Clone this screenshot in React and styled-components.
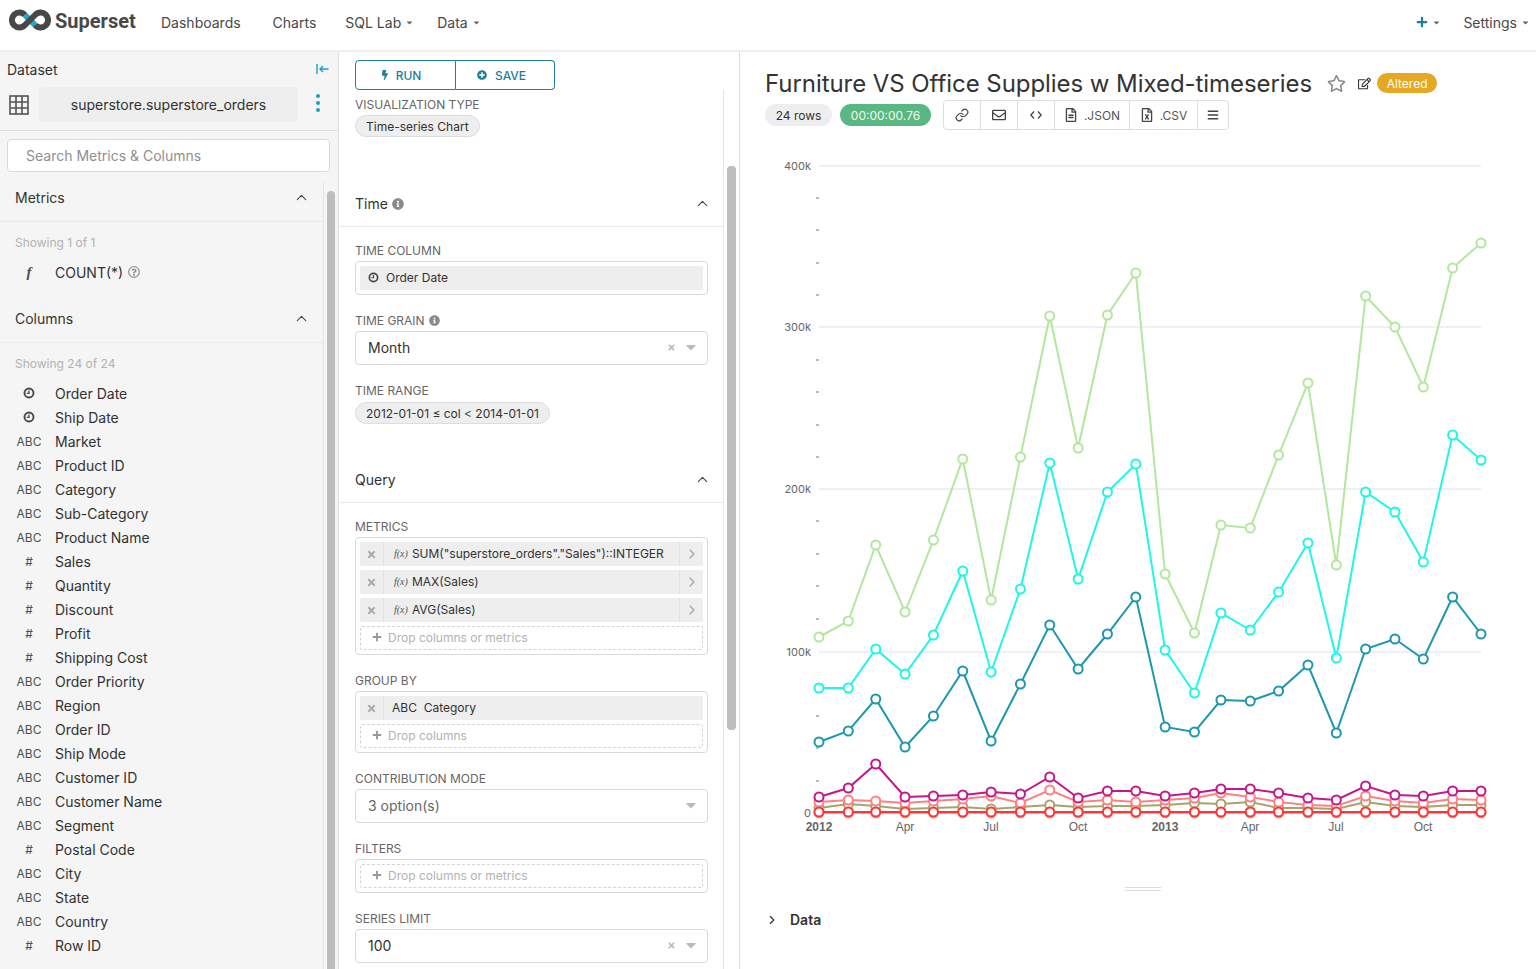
import React from "react";
import styled, { createGlobalStyle } from "styled-components";
import {
  FaBolt, FaPlusCircle, FaRegEnvelope, FaRegFileAlt, FaRegFileExcel, FaBars,
  FaRegStar, FaRegEdit, FaInfoCircle, FaPlus, FaCaretDown, FaRegQuestionCircle,
  FaTimes,
} from "react-icons/fa";
import { ChevronUp, ChevronRight, Link } from "lucide-react";

const PRIMARY = "#1f7f99";

const GlobalStyle = createGlobalStyle`
  html, body { margin: 0; padding: 0; height: 969px; overflow: hidden; background: #fff; }
  body { font-family: Inter, "Liberation Sans", sans-serif; font-size: 14px; color: #323232; }
  * { box-sizing: border-box; }
`;

/* ---------- top nav ---------- */
const Nav = styled.nav`
  height: 52px;
  display: flex;
  align-items: center;
  border-bottom: 2px solid #eeeeee;
  padding: 0 6px 6px 9px;
`;
const Brand = styled.div`
  display: flex;
  align-items: center;
  gap: 4px;
  width: 152px;
  margin-top: -3px;
  font-family: Roboto, sans-serif;
  font-size: 20px;
  font-weight: 700;
  color: #484848;
  svg { margin-top: -2px; }
`;
const NavItem = styled.a`
  display: flex;
  align-items: center;
  gap: 4px;
  margin-right: ${(p) => p.$gap}px;
  color: #484848;
  svg { color: #666; font-size: 9px; }
`;
const NavRight = styled.div`
  margin-left: auto;
  display: flex;
  align-items: center;
`;
const PlusIcon = styled(FaPlus)`
  && { color: ${PRIMARY}; font-size: 12px; }
`;

/* ---------- page columns ---------- */
const Page = styled.div`
  display: flex;
  height: 917px;
`;
const LeftPanel = styled.aside`
  width: 339px;
  flex: none;
  background: #f5f5f5;
  border-right: 1px solid #dddddd;
  display: flex;
  flex-direction: column;
`;
const CenterPanel = styled.section`
  width: 401px;
  flex: none;
  border-right: 1px solid #dddddd;
  display: flex;
  flex-direction: column;
`;
const RightPanel = styled.main`
  flex: 1;
  min-width: 0;
  padding: 18px 0 0 25px;
`;

/* ---------- dataset column ---------- */
const DatasetHead = styled.div`
  height: 79px;
  padding: 8px 7px 0;
  border-bottom: 1px solid #dddddd;
`;
const DatasetTitleRow = styled.div`
  display: flex;
  justify-content: space-between;
  align-items: center;
  height: 18px;
  padding-right: 2px;
  svg { display: block; }
`;
const DatasetPickRow = styled.div`
  display: flex;
  align-items: center;
  margin-top: 9px;
  padding-left: 2px;
  gap: 10px;
`;
const DatasetName = styled.div`
  width: 259px;
  height: 35px;
  background: #eeeeee;
  border-radius: 4px;
  display: flex;
  align-items: center;
  justify-content: center;
`;
const KebabSlot = styled.span`
  margin-left: 8px;
`;
const SearchBox = styled.div`
  height: 33px;
  margin: 8px 8px 0 7px;
  background: #fff;
  border: 1px solid #d9d9d9;
  border-radius: 4px;
  padding-left: 18px;
  display: flex;
  align-items: center;
  color: #8f8f8f;
`;
const LeftBody = styled.div`
  flex: 1;
  min-height: 0;
  margin-top: 10px;
  display: flex;
`;
const LeftList = styled.div`
  width: 323px;
  flex: none;
`;
const SectionHead = styled.div`
  height: ${(p) => p.$h}px;
  margin-top: ${(p) => p.$top || 0}px;
  display: flex;
  align-items: flex-end;
  justify-content: space-between;
  padding: 0 15px ${(p) => p.$pb}px 15px;
  border-bottom: 1px solid #eaeaea;
`;
const ControlHead = styled(SectionHead)`
  padding-left: 16px;
  padding-right: 14px;
`;
const Chevron = styled(ChevronUp)`
  color: #444;
  width: 17px;
  height: 17px;
  stroke-width: 1.5;
  margin-right: -2px;
`;
const Showing = styled.div`
  font-size: 12px;
  color: #b2b2b2;
  padding: 0 15px;
  margin-top: ${(p) => p.$top}px;
  height: 16px;
  line-height: 16px;
  margin-bottom: ${(p) => p.$bottom}px;
`;
const ListRow = styled.div`
  height: 24px;
  display: flex;
  align-items: center;
`;
const TypeCell = styled.div`
  width: 58px;
  margin-right: -3px;
  display: flex;
  justify-content: center;
  font-size: 12px;
  color: #4f4f4f;
`;
const FuncGlyph = styled.span`
  font-family: "Liberation Serif", serif;
  font-style: italic;
  font-size: 15px;
  font-weight: 700;
`;
const HelpIcon = styled(FaRegQuestionCircle)`
  color: #8a8a8a;
  font-size: 12px;
  margin-left: 5px;
`;
const ScrollTrack = styled.div`
  flex: 1;
  border-left: 1px solid #e4e4e4;
  padding: 0 3px;
  background: ${(p) => p.$bg};
`;
const ScrollThumb = styled.div`
  height: ${(p) => p.$h}px;
  margin-top: ${(p) => p.$top}px;
  background: #bdbdbd;
  border-radius: 4px;
`;

/* ---------- controls column ---------- */
const ButtonBar = styled.div`
  height: 38px;
  padding: 8px 16px 0;
  display: flex;
`;
const ActionButton = styled.button`
  width: ${(p) => (p.$first ? 101 : 99)}px;
  height: 30px;
  background: #fff;
  color: ${PRIMARY};
  font: 500 12px Inter, sans-serif;
  display: flex;
  align-items: center;
  justify-content: center;
  gap: ${(p) => (p.$first ? 6 : 8)}px;
  border: 1px solid ${PRIMARY};
  border-radius: ${(p) => (p.$first ? "4px 0 0 4px" : "0 4px 4px 0")};
  border-left-width: ${(p) => (p.$first ? 1 : 0)}px;
  padding: 0 ${(p) => (p.$first ? 10 : 7)}px 0 0;
  svg { font-size: 10px; }
`;
const ControlsWrap = styled.div`
  flex: 1;
  min-height: 0;
  display: flex;
`;
const Controls = styled.div`
  width: 384px;
  flex: none;
  overflow: hidden;
`;
const Group = styled.div`
  padding: ${(p) => p.$top}px 15px 0 16px;
`;
const Label = styled.div`
  height: 16px;
  line-height: 14px;
  font-size: 12px;
  color: #666;
  text-transform: uppercase;
  display: flex;
  align-items: flex-start;
  gap: 4px;
  margin-bottom: ${(p) => p.$mb ?? 1}px;
  svg { font-size: 11px; color: #8a8a8a; margin-top: 1px; }
`;
const Field = styled.div`
  margin-bottom: 19px;
  width: 353px;
`;
const Pill = styled.div`
  display: inline-flex;
  align-items: center;
  height: 22px;
  padding: 0 10px;
  background: #eeeeee;
  border: 1px solid #dddddd;
  border-radius: 11px;
  font-size: 12px;
  white-space: nowrap;
  vertical-align: top;
`;
const HeadLabel = styled.div`
  display: flex;
  align-items: center;
  gap: 4px;
  svg { font-size: 12px; color: #8a8a8a; }
`;
const ControlBox = styled.div`
  border: 1px solid #d9d9d9;
  border-radius: 4px;
  padding: 4px;
  display: flex;
  flex-direction: column;
  gap: 4px;
`;
const Chip = styled.div`
  height: 24px;
  background: #eeeeee;
  border-radius: 2px;
  font-size: 12px;
  display: flex;
  align-items: center;
  white-space: nowrap;
`;
const ChipClose = styled.div`
  width: 24px;
  height: 24px;
  flex: none;
  border-right: 1px solid #e2e2e2;
  display: flex;
  align-items: center;
  justify-content: center;
  color: #aaa;
  font-size: 11px;
  margin-right: 8px;
`;
const ChipBody = styled.div`
  flex: 1;
  display: flex;
  align-items: center;
  padding-bottom: 2px;
`;
const ChipArrow = styled.div`
  width: 24px;
  height: 24px;
  border-left: 1px solid #e2e2e2;
  display: flex;
  align-items: center;
  justify-content: center;
  color: #a8a8a8;
`;
const Fx = styled.span`
  font-family: "Liberation Serif", serif;
  font-style: italic;
  font-size: 10px;
  color: #555;
  margin: 0 4px 0 2px;
`;
const DropZone = styled.div`
  height: 24px;
  border: 1px dashed #d4d4d4;
  border-radius: 2px;
  padding: 0 0 2px 11px;
  font-size: 12px;
  color: #b2b2b2;
  display: flex;
  align-items: center;
  gap: 6px;
  svg { font-size: 10px; color: #999; }
`;
const PlainChipRow = styled.div`
  height: 24px;
  background: #eeeeee;
  border-radius: 2px;
  font-size: 12px;
  display: flex;
  align-items: center;
  gap: 7px;
  padding: 0 0 2px 8px;
`;
const SelectBox = styled.div`
  height: 34px;
  border: 1px solid #d9d9d9;
  border-radius: 4px;
  padding: 0 8px 2px 12px;
  display: flex;
  align-items: center;
  color: ${(p) => (p.$muted ? "#666" : "#323232")};
`;
const SelectEnd = styled.div`
  margin-left: auto;
  display: flex;
  align-items: center;
  gap: 7px;
  color: #bbb;
  font-size: 9px;
  svg:last-child { font-size: 16px; }
`;

/* ---------- chart column ---------- */
const TitleRow = styled.div`
  display: flex;
  align-items: center;
  height: 26px;
`;
const ChartTitle = styled.h1`
  margin: 0;
  font-size: 24px;
  font-weight: 400;
  letter-spacing: -0.06px;
  color: #333;
  white-space: nowrap;
`;
const StarIcon = styled(FaRegStar)`
  margin-left: 15px;
  font-size: 19px;
  color: #8a8a8a;
`;
const EditIcon = styled(FaRegEdit)`
  margin-left: 12px;
  font-size: 13px;
  color: #333;
`;
const Altered = styled.span`
  margin-left: 6px;
  height: 20px;
  width: 60px;
  background: #e5a823;
  border-radius: 10px;
  color: #fff;
  font-size: 12px;
  display: flex;
  align-items: center;
  justify-content: center;
`;
const StatusRow = styled.div`
  display: flex;
  align-items: center;
  margin-top: 4px;
  height: 30px;
`;
const RowsBadge = styled.span`
  height: 22px;
  width: 67px;
  background: #eeeeee;
  border-radius: 11px;
  font-size: 12px;
  display: flex;
  align-items: center;
  justify-content: center;
`;
const TimerBadge = styled(RowsBadge)`
  width: 91px;
  margin-left: 8px;
  background: #59b881;
  color: #f0f8f3;
`;
const ToolGroup = styled.div`
  display: flex;
  height: 30px;
  margin-left: 12px;
  border: 1px solid #dddddd;
  border-radius: 4px;
`;
const ToolButton = styled.div`
  width: ${(p) => p.$w}px;
  height: 100%;
  flex: none;
  border-right: ${(p) => (p.$last ? "0" : "1px solid #dddddd")};
  display: flex;
  align-items: center;
  justify-content: center;
  gap: 6px;
  font-size: 12px;
  color: #555;
  svg { color: #444; }
`;
const ChartSvg = styled.svg`
  display: block;
  width: 796px;
  height: 690px;
  margin: 20px 0 0 -25px;
`;
const ResizeHandle = styled.div`
  width: 36px;
  height: 4px;
  margin: 47px 0 0 360px;
  border-top: 1px solid #dddddd;
  border-bottom: 1px solid #dddddd;
`;
const DataRow = styled.div`
  display: flex;
  align-items: center;
  margin-top: 20px;
  font-weight: 600;
  color: #333;
  svg { margin-right: 11px; }
`;

/* ---------- small drawings ---------- */
const ClockIcon = ({ size = 12 }) => (
  <svg width={size} height={size} viewBox="0 0 12 12" fill="none" stroke="#484848">
    <circle cx="6" cy="6" r="4.5" strokeWidth="1.9" />
    <path d="M6 3.4V6.3H3.8" strokeWidth="1.3" />
  </svg>
);

const Logo = () => (
  <svg width="42" height="22" viewBox="9 9 42 22" fill="none">
    <path d="M25 15L35 25" stroke="#20a7c9" strokeWidth="6" />
    <path d="M25 15A7.5 7.5 0 1 0 25 25L35 15A7.5 7.5 0 1 1 35 25" stroke="#484848" strokeWidth="6" />
  </svg>
);

const TableGrid = () => (
  <svg width="20" height="20" viewBox="0 0 20 20" fill="none" stroke="#555" strokeWidth="1.6">
    <rect x="1" y="1" width="18" height="18" />
    <path d="M7 1V19M13 1V19M1 7H19M1 13H19" />
  </svg>
);

const CollapseIcon = () => (
  <svg width="13" height="10" viewBox="0 0 13 10" fill="none" stroke="#20a0c0" strokeWidth="1.4">
    <path d="M1 0V10M12.5 5H4M7 2L4 5L7 8" />
  </svg>
);

const KebabDots = () => (
  <svg width="4" height="18" viewBox="0 0 4 18" fill="#1f9dbd">
    <circle cx="2" cy="2" r="2" />
    <circle cx="2" cy="9" r="2" />
    <circle cx="2" cy="16" r="2" />
  </svg>
);

const CodeIcon = () => (
  <svg width="12" height="8" viewBox="0 0 12 8" fill="none" stroke="#444" strokeWidth="1.3">
    <path d="M4 0.5L0.8 4L4 7.5M8 0.5L11.2 4L8 7.5" />
  </svg>
);

/* ---------- data ---------- */
const COLUMNS = [
  ["time", "Order Date"], ["time", "Ship Date"], ["ABC", "Market"], ["ABC", "Product ID"],
  ["ABC", "Category"], ["ABC", "Sub-Category"], ["ABC", "Product Name"], ["#", "Sales"],
  ["#", "Quantity"], ["#", "Discount"], ["#", "Profit"], ["#", "Shipping Cost"],
  ["ABC", "Order Priority"], ["ABC", "Region"], ["ABC", "Order ID"], ["ABC", "Ship Mode"],
  ["ABC", "Customer ID"], ["ABC", "Customer Name"], ["ABC", "Segment"], ["#", "Postal Code"],
  ["ABC", "City"], ["ABC", "State"], ["ABC", "Country"], ["#", "Row ID"],
];

const DAYS = [0, 31, 60, 91, 121, 152, 182, 213, 244, 274, 305, 335, 366, 397, 425, 456, 486, 517, 547, 578, 609, 639, 670, 700];
const xAt = (i) => 819 + (DAYS[i] * 662) / 700;

const SERIES = [
  ["#a9a26c", [808, 804, 806, 809, 808, 807, 809, 807, 805, 807, 806, 806, 805, 803, 804, 802, 808, 808, 809, 802, 806, 807, 805, 805]],
  ["#ff8083", [802, 800, 801, 803, 801, 799, 796, 803, 790, 802, 800, 802, 800, 798, 793, 797, 802, 805, 806, 796, 801, 803, 799, 800]],
  ["#c4188a", [797, 788, 764, 797, 796, 795, 792, 794, 777, 798, 791, 791, 796, 793, 789, 789, 793, 798, 800, 786, 795, 796, 791, 791]],
  ["#1f97ae", [742, 731, 699, 747, 716, 671, 741, 684, 625, 669, 634, 597, 727, 732, 700, 701, 691, 665, 733, 649, 639, 659, 597, 634]],
  ["#1ff7e6", [688, 688, 649, 674, 635, 571, 672, 589, 463, 579, 492, 464, 650, 693, 613, 630, 592, 543, 658, 492, 512, 562, 435, 460]],
  ["#b2e79d", [637, 621, 545, 612, 540, 459, 600, 457, 316, 448, 315, 273, 574, 633, 525, 528, 455, 383, 565, 296, 327, 387, 268, 243]],
  ["#ffd266", Array(24).fill(812)],
  ["#cbc29a", Array(24).fill(813)],
  ["#ff3339", Array(24).fill(812)],
];

const GRID = [["400k", 166], ["300k", 327], ["200k", 489], ["100k", 652]];
const MINOR = [198, 230, 263, 295, 360, 392, 425, 457, 521, 554, 586, 619, 684, 716, 748, 781];
const X_LABELS = [
  ["2012", 819, true], ["Apr", 905], ["Jul", 991], ["Oct", 1078],
  ["2013", 1165, true], ["Apr", 1250], ["Jul", 1336], ["Oct", 1423],
];

const Chart = () => (
  <ChartSvg viewBox="740 150 796 690">
    {GRID.map(([label, y]) => (
      <g key={label}>
        <line x1="819" x2="1481" y1={y} y2={y} stroke="#e9ebf2" strokeWidth="1.5" />
        <text x="811" y={y + 4} textAnchor="end" fontFamily="Inter, sans-serif" fontSize="11" fill="#666">{label}</text>
      </g>
    ))}
    {MINOR.map((y) => (
      <line key={y} x1="816" x2="819" y1={y} y2={y} stroke="#777" strokeWidth="1" />
    ))}
    <text x="811" y="817" textAnchor="end" fontFamily="Inter, sans-serif" fontSize="11" fill="#666">0</text>
    {X_LABELS.map(([label, x, bold]) => (
      <text key={label + x} x={x} y="831" textAnchor="middle" fontFamily='"Liberation Sans", sans-serif' fontSize="12" fontWeight={bold ? 700 : 400} fill="#666">{label}</text>
    ))}
    {SERIES.map(([color, ys]) => (
      <g key={color}>
        <polyline points={ys.map((y, i) => `${xAt(i)},${y}`).join(" ")} fill="none" stroke={color} strokeWidth="2" />
        {ys.map((y, i) => (
          <circle key={i} cx={xAt(i)} cy={y} r="4.5" fill="#fff" stroke={color} strokeWidth="2" />
        ))}
      </g>
    ))}
  </ChartSvg>
);

const MetricChip = ({ children }) => (
  <Chip>
    <ChipClose><FaTimes /></ChipClose>
    <ChipBody><Fx>f(x)</Fx>{children}</ChipBody>
    <ChipArrow><ChevronRight size={16} /></ChipArrow>
  </Chip>
);

const ClearableSelect = ({ value }) => (
  <SelectBox>
    {value}
    <SelectEnd><FaTimes /><FaCaretDown /></SelectEnd>
  </SelectBox>
);

const App = () => (
  <>
    <GlobalStyle />
    <Nav>
      <Brand><Logo />Superset</Brand>
      <NavItem $gap={32}>Dashboards</NavItem>
      <NavItem $gap={29}>Charts</NavItem>
      <NavItem $gap={23}>SQL Lab<FaCaretDown /></NavItem>
      <NavItem $gap={0}>Data<FaCaretDown /></NavItem>
      <NavRight>
        <NavItem $gap={22}><PlusIcon /><FaCaretDown /></NavItem>
        <NavItem $gap={0}>Settings<FaCaretDown /></NavItem>
      </NavRight>
    </Nav>
    <Page>
      <LeftPanel>
        <DatasetHead>
          <DatasetTitleRow>Dataset<CollapseIcon /></DatasetTitleRow>
          <DatasetPickRow>
            <TableGrid />
            <DatasetName>superstore.superstore_orders</DatasetName>
            <KebabSlot><KebabDots /></KebabSlot>
          </DatasetPickRow>
        </DatasetHead>
        <SearchBox>Search Metrics &amp; Columns</SearchBox>
        <LeftBody>
          <LeftList>
            <SectionHead $h={40} $pb={15}>Metrics<Chevron /></SectionHead>
            <Showing $top={13} $bottom={9}>Showing 1 of 1</Showing>
            <ListRow><TypeCell><FuncGlyph>f</FuncGlyph></TypeCell>COUNT(*)<HelpIcon /></ListRow>
            <SectionHead $h={47} $top={12} $pb={15}>Columns<Chevron /></SectionHead>
            <Showing $top={13} $bottom={9}>Showing 24 of 24</Showing>
            {COLUMNS.map(([type, name]) => (
              <ListRow key={name}>
                <TypeCell>{type === "time" ? <ClockIcon /> : type}</TypeCell>
                {name}
              </ListRow>
            ))}
          </LeftList>
          <ScrollTrack>
            <ScrollThumb $top={9} $h={800} />
          </ScrollTrack>
        </LeftBody>
      </LeftPanel>

      <CenterPanel>
        <ButtonBar>
          <ActionButton $first><FaBolt />RUN</ActionButton>
          <ActionButton><FaPlusCircle />SAVE</ActionButton>
        </ButtonBar>
        <ControlsWrap>
          <Controls>
            <Group $top={8}>
              <Label>Visualization Type</Label>
              <Pill>Time-series Chart</Pill>
            </Group>
            <ControlHead $h={90} $pb={14}>
              <HeadLabel>Time <FaInfoCircle /></HeadLabel><Chevron />
            </ControlHead>
            <Group $top={17}>
              <Field>
                <Label>Time Column</Label>
                <ControlBox>
                  <PlainChipRow><ClockIcon size={11} />Order Date</PlainChipRow>
                </ControlBox>
              </Field>
              <Field>
                <Label>Time Grain <FaInfoCircle /></Label>
                <ClearableSelect value="Month" />
              </Field>
              <Field>
                <Label $mb={2}>Time Range</Label>
                <Pill>2012-01-01 ≤ col &lt; 2014-01-01</Pill>
              </Field>
            </Group>
            <ControlHead $h={60} $pb={14}>Query<Chevron /></ControlHead>
            <Group $top={17}>
              <Field>
                <Label>Metrics</Label>
                <ControlBox>
                  <MetricChip>SUM("superstore_orders"."Sales")::INTEGER</MetricChip>
                  <MetricChip>MAX(Sales)</MetricChip>
                  <MetricChip>AVG(Sales)</MetricChip>
                  <DropZone><FaPlus />Drop columns or metrics</DropZone>
                </ControlBox>
              </Field>
              <Field>
                <Label>Group by</Label>
                <ControlBox>
                  <Chip>
                    <ChipClose><FaTimes /></ChipClose>
                    <ChipBody>ABC&nbsp;&nbsp;Category</ChipBody>
                  </Chip>
                  <DropZone><FaPlus />Drop columns</DropZone>
                </ControlBox>
              </Field>
              <Field>
                <Label>Contribution Mode</Label>
                <SelectBox $muted>
                  3 option(s)
                  <SelectEnd><FaCaretDown /></SelectEnd>
                </SelectBox>
              </Field>
              <Field>
                <Label>Filters</Label>
                <ControlBox>
                  <DropZone><FaPlus />Drop columns or metrics</DropZone>
                </ControlBox>
              </Field>
              <Field>
                <Label>Series Limit</Label>
                <ClearableSelect value="100" />
              </Field>
            </Group>
          </Controls>
          <ScrollTrack $bg="#fff">
            <ScrollThumb $top={76} $h={564} />
          </ScrollTrack>
        </ControlsWrap>
      </CenterPanel>

      <RightPanel>
        <TitleRow>
          <ChartTitle>Furniture VS Office Supplies w Mixed-timeseries</ChartTitle>
          <StarIcon />
          <EditIcon />
          <Altered>Altered</Altered>
        </TitleRow>
        <StatusRow>
          <RowsBadge>24 rows</RowsBadge>
          <TimerBadge>00:00:00.76</TimerBadge>
          <ToolGroup>
            <ToolButton $w={37}><Link size={14} /></ToolButton>
            <ToolButton $w={37}><FaRegEnvelope size={14} /></ToolButton>
            <ToolButton $w={37}><CodeIcon /></ToolButton>
            <ToolButton $w={75}><FaRegFileAlt size={14} />.JSON</ToolButton>
            <ToolButton $w={68}><FaRegFileExcel size={14} />.CSV</ToolButton>
            <ToolButton $w={30} $last><FaBars size={12} /></ToolButton>
          </ToolGroup>
        </StatusRow>
        <Chart />
        <ResizeHandle />
        <DataRow><ChevronRight size={14} />Data</DataRow>
      </RightPanel>
    </Page>
  </>
);

export default App;
